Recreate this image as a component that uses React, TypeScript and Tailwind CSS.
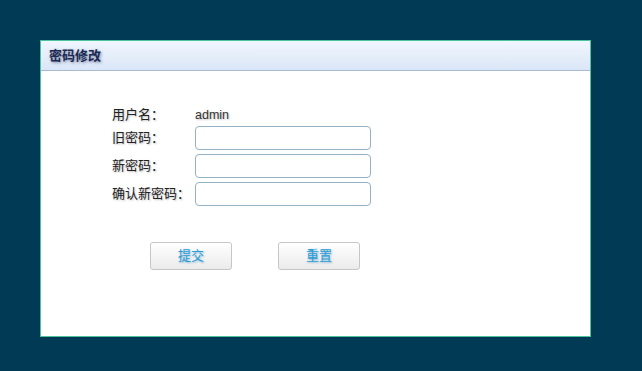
export default function App() {
  const rows = [
    { label: "旧密码：" },
    { label: "新密码：" },
    { label: "确认新密码：" },
  ];

  return (
    <div className="h-[371px] w-[642px] bg-[#013a54] pl-[40px] pt-[40px] font-['Liberation_Sans','Noto_Sans_CJK_SC',sans-serif]">
      <div className="flex h-[297px] w-[551px] flex-col border border-[#4cc39c] bg-white">
        <div className="flex h-[30px] items-center border-b border-[#a7bcd2] bg-gradient-to-b from-[#f1f6fe] to-[#dae6f7] pl-[8px]">
          <span className="text-[13px] font-bold text-[#1c2a55] [text-shadow:1px_1px_3px_rgba(40,50,90,0.55)]">密码修改</span>
        </div>

        <div className="flex flex-col pl-[71px] pt-[33px] text-[13px] text-[#222] [text-shadow:1px_1px_2px_rgba(0,0,0,0.25)]">
          <div className="flex h-[22px] items-center">
            <span className="w-[83px]">用户名：</span>
            <span className="text-[12.5px] text-[#333]">admin</span>
          </div>
          {rows.map((r) => (
            <div key={r.label} className="mb-[4px] flex h-[24px] items-center">
              <span className="w-[83px]">{r.label}</span>
              <input className="h-[24px] w-[176px] rounded-[4px] border border-[#93b2c6] bg-white outline-none" />
            </div>
          ))}
        </div>

        <div className="mt-[32px] flex gap-[46px] pl-[109px]">
          {["提交", "重置"].map((b) => (
            <button
              key={b}
              className="h-[28px] w-[82px] rounded-[3px] border border-[#c6c6c6] bg-gradient-to-b from-white to-[#ebebeb] text-[13px] text-[#2b9dd5] [text-shadow:1px_1px_2px_rgba(40,120,180,0.5)]"
            >
              {b}
            </button>
          ))}
        </div>
      </div>
    </div>
  );
}
